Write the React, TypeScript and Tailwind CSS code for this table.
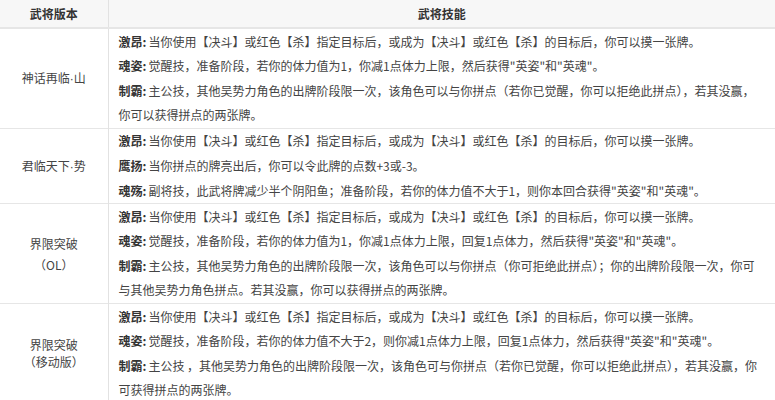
import * as React from "react";

type Line = { label?: string; text: string };

interface Row {
  version: string[];
  versionLeading: string;
  lines: Line[];
}

const jiAng: Line = {
  label: "激昂",
  text: "当你使用【决斗】或红色【杀】指定目标后，或成为【决斗】或红色【杀】的目标后，你可以摸一张牌。",
};

const rows: Row[] = [
  {
    version: ["神话再临·山"],
    versionLeading: "leading-[20px]",
    lines: [
      jiAng,
      { label: "魂姿", text: "觉醒技，准备阶段，若你的体力值为1，你减1点体力上限，然后获得\"英姿\"和\"英魂\"。" },
      {
        label: "制霸",
        text: "主公技，其他吴势力角色的出牌阶段限一次，该角色可以与你拼点（若你已觉醒，你可以拒绝此拼点），若其没赢，",
      },
      { text: "你可以获得拼点的两张牌。" },
    ],
  },
  {
    version: ["君临天下·势"],
    versionLeading: "leading-[20px]",
    lines: [
      jiAng,
      { label: "鹰扬", text: "当你拼点的牌亮出后，你可以令此牌的点数+3或-3。" },
      {
        label: "魂殇",
        text: "副将技，此武将牌减少半个阴阳鱼；准备阶段，若你的体力值不大于1，则你本回合获得\"英姿\"和\"英魂\"。",
      },
    ],
  },
  {
    version: ["界限突破", "（OL）"],
    versionLeading: "leading-[21px]",
    lines: [
      jiAng,
      {
        label: "魂姿",
        text: "觉醒技，准备阶段，若你的体力值为1，你减1点体力上限，回复1点体力，然后获得\"英姿\"和\"英魂\"。",
      },
      {
        label: "制霸",
        text: "主公技，其他吴势力角色的出牌阶段限一次，该角色可以与你拼点（你可拒绝此拼点）；你的出牌阶段限一次，你可",
      },
      { text: "与其他吴势力角色拼点。若其没赢，你可以获得拼点的两张牌。" },
    ],
  },
  {
    version: ["界限突破", "（移动版）"],
    versionLeading: "leading-[17px]",
    lines: [
      jiAng,
      {
        label: "魂姿",
        text: "觉醒技，准备阶段，若你的体力值不大于2，则你减1点体力上限，回复1点体力，然后获得\"英姿\"和\"英魂\"。",
      },
      {
        label: "制霸",
        text: "主公技 ，其他吴势力角色的出牌阶段限一次，该角色可与你拼点（若你已觉醒，你可以拒绝此拼点），若其没赢，你",
      },
      { text: "可获得拼点的两张牌。" },
    ],
  },
];

// the middle dot in the source is a narrow latin one
function VersionName({ name }: { name: string }) {
  const parts = name.split("·");
  if (parts.length < 2) return <>{name}</>;
  return (
    <>
      {parts[0]}
      <span className="font-['Liberation_Sans',sans-serif]">·</span>
      {parts[1]}
    </>
  );
}

export default function App() {
  return (
    <div className="w-[775px] h-[400px] overflow-hidden bg-white font-['Noto_Sans_CJK_SC','Noto_Sans',sans-serif] text-[12px] text-[#444]">
      <table className="w-[775px] table-fixed border-collapse">
        <colgroup>
          <col className="w-[108px]" />
          <col />
        </colgroup>
        <thead>
          <tr className="bg-[#f7f7f7]">
            <th className="h-[27px] border-b-2 border-r border-b-[#e6e6e6] border-r-[#e2e2e2] p-0 text-center font-bold text-[#333] leading-[27px]">
              武将版本
            </th>
            <th className="h-[27px] border-b-2 border-b-[#e6e6e6] p-0 text-center font-bold text-[#333] leading-[27px]">
              武将技能
            </th>
          </tr>
        </thead>
        <tbody>
          {rows.map((row, i) => (
            <tr key={i} className="border-b border-[#e6e6e6]">
              <td className={`border-r border-[#e2e2e2] p-0 text-center align-middle ${row.versionLeading}`}>
                {row.version.map((v) => (
                  <div key={v}>
                    <VersionName name={v} />
                  </div>
                ))}
              </td>
              <td className="pl-[10px] pr-0 pt-[0.5px] pb-0 align-top leading-[24.6px]">
                {row.lines.map((line, j) => (
                  <div key={j} className="whitespace-nowrap">
                    {line.label && <span className="mr-[2px] font-bold text-[#333]">{line.label}:</span>}
                    {line.text}
                  </div>
                ))}
              </td>
            </tr>
          ))}
        </tbody>
      </table>
    </div>
  );
}
